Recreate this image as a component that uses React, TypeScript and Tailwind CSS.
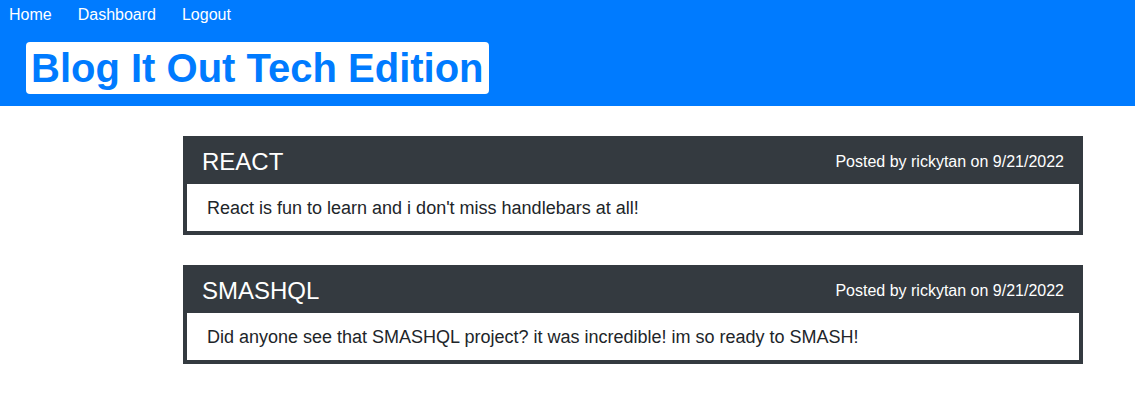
import React from "react";

const posts = [
  { title: "REACT", body: "React is fun to learn and i don't miss handlebars at all!" },
  { title: "SMASHQL", body: "Did anyone see that SMASHQL project? it was incredible! im so ready to SMASH!" },
];

export default function App() {
  return (
    <div className="min-h-[400px] bg-white" style={{ fontFamily: '"Liberation Sans", Arial, sans-serif' }}>
      <header className="h-[106px] bg-[#007bff]">
        <nav className="flex gap-[26px] pl-[9px] pt-[5px] text-[16px] leading-[20px] text-white">
          <a>Home</a>
          <a>Dashboard</a>
          <a>Logout</a>
        </nav>
        <div className="ml-[26px] mt-[17px] inline-block h-[52px] rounded-[4px] bg-white px-[5px]">
          <h1 className="text-[40px] font-bold leading-[52px] text-[#007bff]">Blog It Out Tech Edition</h1>
        </div>
      </header>
      <main className="ml-[183px] mt-[30px] flex w-[900px] flex-col gap-[30px]">
        {posts.map((p) => (
          <div key={p.title} className="bg-[#343a40] px-[4px] pb-[4px]">
            <div className="flex h-[48px] items-center justify-between pl-[15px] pr-[15px] pt-[3px] text-white">
              <span className="text-[24px]">{p.title}</span>
              <span className="text-[16px]">Posted by rickytan on 9/21/2022</span>
            </div>
            <div className="flex h-[47px] items-center bg-white pl-[20px] pt-[1px] text-[18px] text-[#212529]">
              {p.body}
            </div>
          </div>
        ))}
      </main>
    </div>
  );
}
